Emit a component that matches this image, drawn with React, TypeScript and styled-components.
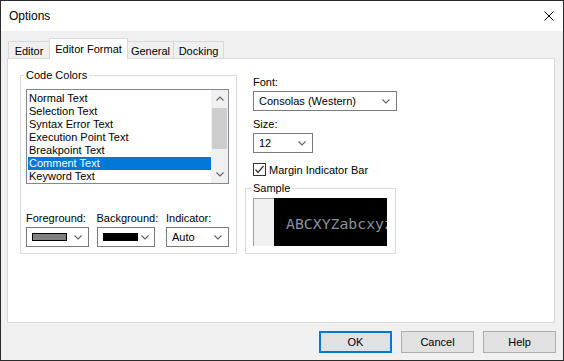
import { FC } from "react";
import styled, { createGlobalStyle } from "styled-components";

// css
const GlobalStyle = createGlobalStyle`
  html, body {
    margin: 0;
    padding: 0;
    background: #fff;
  }
  body {
    font-family: "Liberation Sans", Arial, sans-serif;
    font-size: 11px;
    color: #000;
  }
  * {
    box-sizing: border-box;
  }
`;

const Window = styled.div`
  width: 564px;
  height: 361px;
  border: 1px solid #2b2b2b;
  background: #f0f0f0;
  display: flex;
  flex-direction: column;
`;

const TitleBar = styled.div`
  height: 30px;
  background: #fff;
  display: flex;
  align-items: center;
  justify-content: space-between;
  padding: 0 9px 0 8px;
  font-size: 12px;
`;

const Body = styled.div`
  flex: 1;
  display: flex;
  flex-direction: column;
  padding: 7px 8px 0 6px;
`;

const TabStrip = styled.div`
  display: flex;
  align-items: flex-end;
  height: 20px;
  padding-left: 1px;
`;

const Tab = styled.div<{ $active?: boolean; $w: number }>`
  width: ${(p) => p.$w}px;
  height: ${(p) => (p.$active ? 21 : 17)}px;
  margin-left: -1px;
  margin-bottom: ${(p) => (p.$active ? -1 : 0)}px;
  border: 1px solid #d9d9d9;
  border-bottom: none;
  background: ${(p) => (p.$active ? "#fff" : "#f0f0f0")};
  position: relative;
  z-index: ${(p) => (p.$active ? 2 : 1)};
  display: flex;
  align-items: center;
  justify-content: center;
  padding-top: ${(p) => (p.$active ? 0 : 1)}px;
  &:first-child {
    margin-left: 0;
  }
`;

const Panel = styled.div`
  height: 265px;
  border: 1px solid #d9d9d9;
  background: #fff;
  display: flex;
  align-items: flex-start;
  gap: 8px;
  padding: 10px 0 0 12px;
`;

const Group = styled.fieldset<{ $w: number }>`
  width: ${(p) => p.$w}px;
  margin: 0;
  border: 1px solid #dcdcdc;
  min-width: 0;
`;

const Legend = styled.legend`
  padding: 0 2px;
  margin-left: -2px;
  line-height: 13px;
  height: 13px;
`;

const CodeGroup = styled(Group)`
  padding: 7px 7px 6px 5px;
`;

const SampleGroup = styled(Group)`
  padding: 3px 8px 7px 7px;
`;

const ListBox = styled.div`
  width: 203px;
  height: 95px;
  border: 1px solid #828790;
  display: flex;
  overflow: hidden;
`;

const Items = styled.div`
  flex: 1;
  padding: 2px 0 0 1px;
  overflow: hidden;
`;

const Item = styled.div<{ $selected?: boolean }>`
  height: 13px;
  line-height: 13px;
  padding-left: 1px;
  white-space: nowrap;
  background: ${(p) => (p.$selected ? "#0078d7" : "transparent")};
  color: ${(p) => (p.$selected ? "#fff" : "#000")};
`;

const ScrollBar = styled.div`
  width: 17px;
  background: #f0f0f0;
  display: flex;
  flex-direction: column;
`;

const ScrollButton = styled.div`
  height: 17px;
  display: flex;
  align-items: center;
  justify-content: center;
`;

const Track = styled.div`
  flex: 1;
  padding: 1px 1px 0 1px;
`;

const Thumb = styled.div`
  height: 41px;
  background: #cdcdcd;
`;

const ColorRow = styled.div`
  display: flex;
  margin-top: 28px;
`;

const Field = styled.div<{ $w?: number }>`
  display: flex;
  flex-direction: column;
  align-items: flex-start;
  width: ${(p) => (p.$w ? `${p.$w}px` : "auto")};
`;

const Label = styled.div`
  line-height: 13px;
  height: 13px;
  white-space: nowrap;
`;

const Combo = styled.div<{ $w: number }>`
  width: ${(p) => p.$w}px;
  height: 20px;
  margin-top: 2px;
  border: 1px solid #7a7a7a;
  background: #fff;
  display: flex;
  align-items: center;
  padding: 0 6px 0 4px;
  gap: 3px;
  & svg {
    flex-shrink: 0;
  }
`;

const ComboText = styled.div`
  flex: 1;
  white-space: nowrap;
  overflow: hidden;
  padding-left: 1px;
`;

const Swatch = styled.div<{ $color: string }>`
  flex: 0 0 35px;
  height: 8px;
  margin-left: 1px;
  margin-right: auto;
  background: ${(p) => p.$color};
  border: 1px solid #000;
`;

const RightColumn = styled.div`
  width: 151px;
  display: flex;
  flex-direction: column;
  padding-top: 7px;
`;

const RightField = styled(Field)`
  margin-left: 8px;
  & + & {
    margin-top: 7px;
  }
`;

const CheckRow = styled.label`
  display: flex;
  align-items: center;
  gap: 3px;
  height: 13px;
  margin: 10px 0 0 8px;
`;

const CheckBox = styled.div`
  width: 13px;
  height: 13px;
  border: 1px solid #333;
  background: #fff;
  display: flex;
  align-items: center;
  justify-content: center;
`;

const SampleWrap = styled.div`
  margin-top: 6px;
`;

const SampleBox = styled.div`
  width: 134px;
  height: 48px;
  display: flex;
  overflow: hidden;
`;

const Margin = styled.div`
  width: 21px;
  background: #f0f0f0;
  border-left: 1px solid #a0a0a0;
  border-top: 1px solid #a0a0a0;
`;

const SampleText = styled.div`
  flex: 1;
  background: #000;
  color: #8a929c;
  font-family: "DejaVu Sans Mono", "Liberation Mono", monospace;
  font-size: 14.8px;
  display: flex;
  align-items: center;
  padding: 3px 0 0 12px;
  white-space: nowrap;
  overflow: hidden;
`;

const ButtonRow = styled.div`
  display: flex;
  justify-content: flex-end;
  gap: 9px;
  margin: 8px -1px 0 0;
`;

const Button = styled.div<{ $default?: boolean }>`
  width: 73px;
  height: 22px;
  background: #e1e1e1;
  border: ${(p) => (p.$default ? "2px solid #0078d7" : "1px solid #adadad")};
  display: flex;
  align-items: center;
  justify-content: center;
`;

const Chevron: FC<{ up?: boolean }> = ({ up }) => (
  <svg width="8" height="5" viewBox="0 0 8 5">
    <polyline
      points={up ? "0.5,4.5 4,1 7.5,4.5" : "0.5,0.5 4,4 7.5,0.5"}
      fill="none"
      stroke="#606060"
      strokeWidth="1.1"
    />
  </svg>
);

const items = [
  "Normal Text",
  "Selection Text",
  "Syntax Error Text",
  "Execution Point Text",
  "Breakpoint Text",
  "Comment Text",
  "Keyword Text",
];

const tabs = [
  { label: "Editor", w: 42 },
  { label: "Editor Format", w: 79, active: true },
  { label: "General", w: 47 },
  { label: "Docking", w: 51 },
];

const App: FC = () => {
  return (
    <>
      <GlobalStyle />
      <Window>
        <TitleBar>
          <span>Options</span>
          <svg width="10" height="10" viewBox="0 0 10 10">
            <path d="M0.5 0.5 L9.5 9.5 M9.5 0.5 L0.5 9.5" stroke="#000" strokeWidth="1" />
          </svg>
        </TitleBar>
        <Body>
          <TabStrip>
            {tabs.map((t) => (
              <Tab key={t.label} $w={t.w} $active={t.active}>
                {t.label}
              </Tab>
            ))}
          </TabStrip>
          <Panel>
            <CodeGroup $w={217}>
              <Legend>Code Colors</Legend>
              <ListBox>
                <Items>
                  {items.map((it) => (
                    <Item key={it} $selected={it === "Comment Text"}>
                      {it}
                    </Item>
                  ))}
                </Items>
                <ScrollBar>
                  <ScrollButton>
                    <Chevron up />
                  </ScrollButton>
                  <Track>
                    <Thumb />
                  </Track>
                  <ScrollButton>
                    <Chevron />
                  </ScrollButton>
                </ScrollBar>
              </ListBox>
              <ColorRow>
                <Field $w={71}>
                  <Label>Foreground:</Label>
                  <Combo $w={63}>
                    <Swatch $color="#808080" />
                    <Chevron />
                  </Combo>
                </Field>
                <Field $w={70}>
                  <Label>Background:</Label>
                  <Combo $w={58}>
                    <Swatch $color="#000" />
                    <Chevron />
                  </Combo>
                </Field>
                <Field>
                  <Label>Indicator:</Label>
                  <Combo $w={63}>
                    <ComboText>Auto</ComboText>
                    <Chevron />
                  </Combo>
                </Field>
              </ColorRow>
            </CodeGroup>
            <RightColumn>
              <RightField>
                <Label>Font:</Label>
                <Combo $w={144}>
                  <ComboText>Consolas (Western)</ComboText>
                  <Chevron />
                </Combo>
              </RightField>
              <RightField>
                <Label>Size:</Label>
                <Combo $w={60}>
                  <ComboText>12</ComboText>
                  <Chevron />
                </Combo>
              </RightField>
              <CheckRow>
                <CheckBox>
                  <svg width="11" height="11" viewBox="0 0 11 11">
                    <polyline points="1.5,5.5 4,8.5 9.5,2" fill="none" stroke="#333" strokeWidth="1.2" />
                  </svg>
                </CheckBox>
                <span>Margin Indicator Bar</span>
              </CheckRow>
              <SampleWrap>
                <SampleGroup $w={151}>
                  <Legend>Sample</Legend>
                  <SampleBox>
                    <Margin />
                    <SampleText>ABCXYZabcxyz</SampleText>
                  </SampleBox>
                </SampleGroup>
              </SampleWrap>
            </RightColumn>
          </Panel>
          <ButtonRow>
            <Button $default>OK</Button>
            <Button>Cancel</Button>
            <Button>Help</Button>
          </ButtonRow>
        </Body>
      </Window>
    </>
  );
};

export default App;
